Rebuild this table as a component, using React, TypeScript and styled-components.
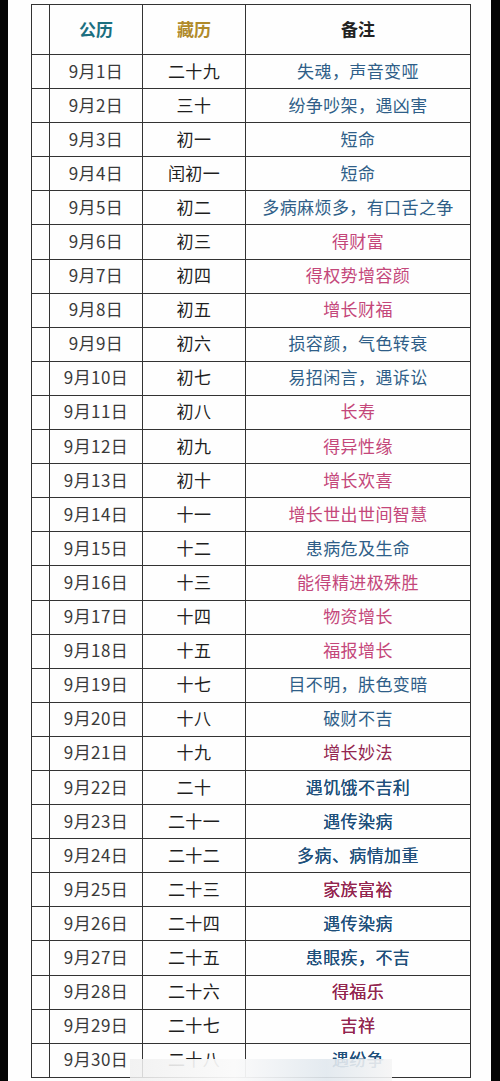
import React from "react";
import styled, { createGlobalStyle } from "styled-components";

const Global = createGlobalStyle`
  html, body { margin: 0; padding: 0; background: #fff; }
  body { font-family: "Noto Sans CJK SC", "Noto Sans", sans-serif; }
`;

const Screen = styled.div`
  display: flex;
  width: 500px;
  height: 1081px;
  overflow: hidden;
  background: #fff;
  position: relative;
`;

const Edge = styled.div<{ $w: number }>`
  width: ${(p) => p.$w}px;
  flex: none;
  background: #050505;
`;

const Page = styled.div`
  flex: 1;
  padding: 4px 0 0 23px;
  background: #fefefe;
`;

const Table = styled.table`
  border-collapse: collapse;
  table-layout: fixed;
  width: 439px;
  border: 1.5px solid #2a2a2a;
`;

const Cell = styled.td<{ $color?: string; $dark?: boolean }>`
  border: 1.3px solid #333;
  text-align: center;
  vertical-align: middle;
  padding: 0 0 2px;
  font-size: 17px;
  line-height: 20px;
  color: ${(p) => p.$color || "#222"};
  font-weight: 400;
  letter-spacing: 0.4px;
  white-space: nowrap;
  overflow: hidden;
  text-shadow: ${(p) => (p.$dark ? "0 0 0.6px currentColor" : "none")};
`;

const HeadCell = styled.th<{ $color: string }>`
  border: 1.3px solid #333;
  text-align: center;
  font-size: 17px;
  font-weight: 700;
  color: ${(p) => p.$color};
  height: 50px;
  padding: 0 0 2px;
  box-sizing: border-box;
`;

const Row = styled.tr`
  height: 34.1px;
`;

const Overlay = styled.div`
  position: absolute;
  left: 130px;
  top: 1059px;
  width: 262px;
  height: 22px;
  background: linear-gradient(90deg, rgba(240,240,240,0.85), rgba(250,250,250,0.95) 40%, rgba(225,232,238,0.9) 75%, rgba(245,245,245,0.9));
`;

const BLUE = "#2f5e88";
const DBLUE = "#1f4f7a";
const PINK = "#c4477a";
const MAROON = "#93264f";

type R = [string, string, string, string, boolean?];

const rows: R[] = [
  ["9月1日", "二十九", "失魂，声音变哑", BLUE],
  ["9月2日", "三十", "纷争吵架，遇凶害", BLUE],
  ["9月3日", "初一", "短命", BLUE],
  ["9月4日", "闰初一", "短命", BLUE],
  ["9月5日", "初二", "多病麻烦多，有口舌之争", BLUE],
  ["9月6日", "初三", "得财富", PINK],
  ["9月7日", "初四", "得权势增容颜", PINK],
  ["9月8日", "初五", "增长财福", PINK],
  ["9月9日", "初六", "损容颜，气色转衰", BLUE],
  ["9月10日", "初七", "易招闲言，遇诉讼", BLUE],
  ["9月11日", "初八", "长寿", PINK],
  ["9月12日", "初九", "得异性缘", PINK],
  ["9月13日", "初十", "增长欢喜", PINK],
  ["9月14日", "十一", "增长世出世间智慧", PINK],
  ["9月15日", "十二", "患病危及生命", BLUE],
  ["9月16日", "十三", "能得精进极殊胜", PINK],
  ["9月17日", "十四", "物资增长", PINK],
  ["9月18日", "十五", "福报增长", PINK],
  ["9月19日", "十七", "目不明，肤色变暗", BLUE],
  ["9月20日", "十八", "破财不吉", BLUE],
  ["9月21日", "十九", "增长妙法", MAROON],
  ["9月22日", "二十", "遇饥饿不吉利", DBLUE, true],
  ["9月23日", "二十一", "遇传染病", DBLUE, true],
  ["9月24日", "二十二", "多病、病情加重", DBLUE, true],
  ["9月25日", "二十三", "家族富裕", MAROON, true],
  ["9月26日", "二十四", "遇传染病", DBLUE, true],
  ["9月27日", "二十五", "患眼疾，不吉", DBLUE, true],
  ["9月28日", "二十六", "得福乐", MAROON, true],
  ["9月29日", "二十七", "吉祥", MAROON, true],
  ["9月30日", "二十八", "遇纷争", DBLUE, true],
];

export default function App() {
  return (
    <>
      <Global />
      <Screen>
        <Edge $w={8} />
        <Page>
          <Table>
            <colgroup>
              <col style={{ width: 18 }} />
              <col style={{ width: 93 }} />
              <col style={{ width: 103 }} />
              <col style={{ width: 225 }} />
            </colgroup>
            <thead>
              <tr>
                <HeadCell $color="#222" />
                <HeadCell $color="#1b6f80">公历</HeadCell>
                <HeadCell $color="#b08a2a">藏历</HeadCell>
                <HeadCell $color="#222">备注</HeadCell>
              </tr>
            </thead>
            <tbody>
              {rows.map(([d, l, n, c, b]) => (
                <Row key={d}>
                  <Cell />
                  <Cell $color="#3a3a3a">{d}</Cell>
                  <Cell $color="#1e1e1e">{l}</Cell>
                  <Cell $color={c} $dark={b}>{n}</Cell>
                </Row>
              ))}
            </tbody>
          </Table>
        </Page>
        <Edge $w={9} />
        <Overlay />
      </Screen>
    </>
  );
}
